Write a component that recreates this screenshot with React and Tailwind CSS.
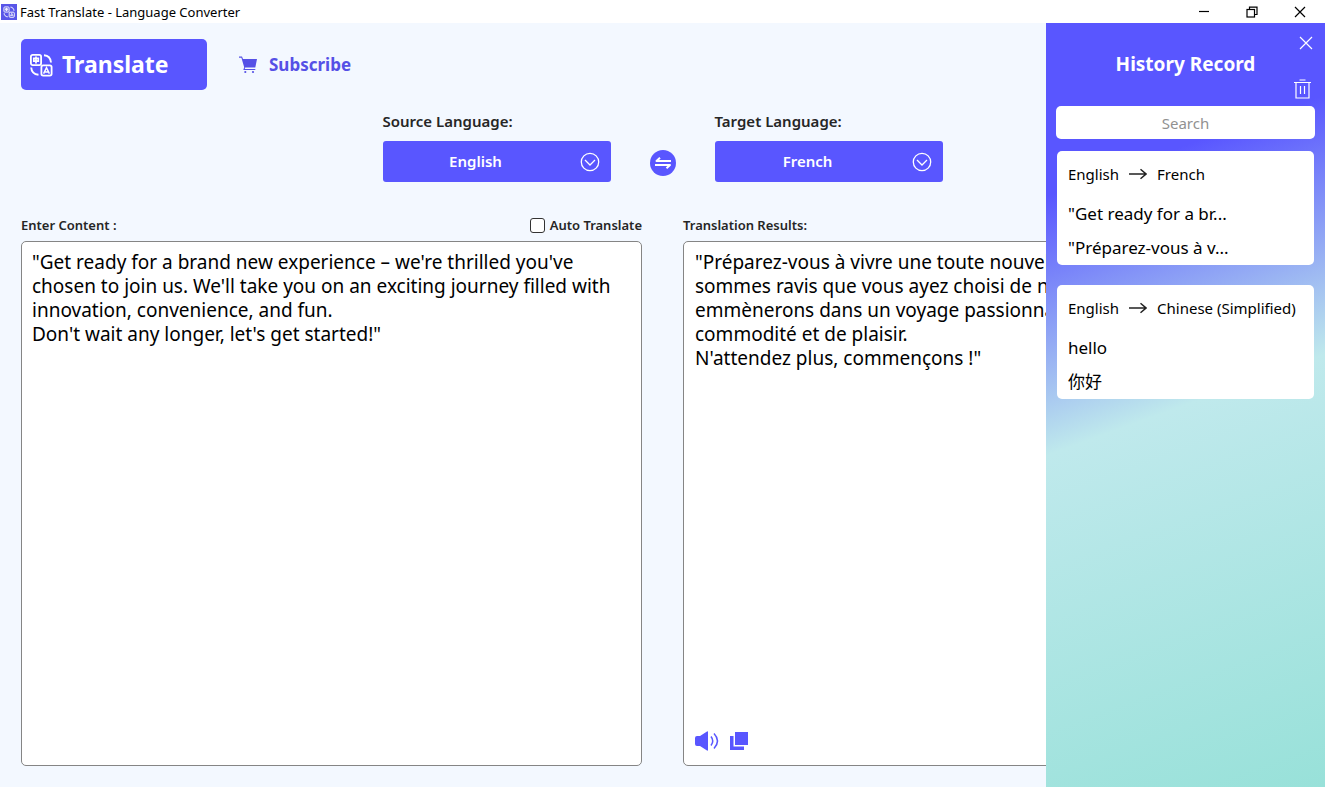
import React, { useState } from "react";

const languages = ["English", "French", "Chinese (Simplified)", "German", "Spanish"];

const sourceSample = `"Get ready for a brand new experience – we're thrilled you've chosen to join us. We'll take you on an exciting journey filled with innovation, convenience, and fun.
Don't wait any longer, let's get started!"`;

const resultSample = `"Préparez-vous à vivre une toute nouvelle expérience – nous sommes ravis que vous ayez choisi de nous rejoindre. Nous vous emmènerons dans un voyage passionnant, plein d'innovation, de commodité et de plaisir.
N'attendez plus, commençons !"`;

const historyItems = [
  { id: 1, from: "English", to: "French", source: "\"Get ready for a br...", result: "\"Préparez-vous à v..." },
  { id: 2, from: "English", to: "Chinese (Simplified)", source: "hello", result: "你好" },
];

const TranslateIcon = ({ className }) => (
  <svg viewBox="0 0 24 24" fill="none" stroke="currentColor" strokeWidth="1.8" className={className} aria-hidden="true">
    <rect x="1.900" y="1.900" width="10.200" height="10.200" rx="1.800" />
    <rect x="12.400" y="12.400" width="10.200" height="10.200" rx="1.800" />
    <path d="M4.800 5.400h4.500v2.800H4.800zM7 3.600v6.800" strokeWidth="1.700" />
    <path d="M14.600 20.600l2.900-6 2.900 6M16 18.900h3" strokeWidth="1.500" />
    <path d="M15 2.200c4 .3 6.600 2.800 7 7.300M2.200 14.500c.3 4.300 2.900 6.900 7.300 7.200" strokeWidth="1.900" />
  </svg>
);

const CartIcon = () => (
  <svg viewBox="0 0 18 18" fill="currentColor" className="size-[18px]" aria-hidden="true">
    <path d="M0 .6h3l1 2.400h14l-1.700 8.400H6.200l-.5 1.500h10.600v1H4.300l.9-2.600L2.400 1.700H0z" />
    <circle cx="6.300" cy="16" r="1.100" />
    <circle cx="14" cy="16" r="1.100" />
  </svg>
);

const ArrowIcon = () => (
  <svg viewBox="0 0 18 12" fill="none" stroke="currentColor" strokeWidth="1.500" className="h-3 w-[18px] shrink-0 text-[#222]" aria-hidden="true">
    <path d="M0 6h17M11.500 1.300L17 6l-5.500 4.700" />
  </svg>
);

const LanguageSelect = ({ id, label, value, onChange }) => (
  <div className="flex w-[228px] flex-col gap-2">
    <label htmlFor={id} className="text-[15px] leading-6 font-semibold text-[#262626]">
      {label}
    </label>
    <div className="relative">
      <select
        id={id}
        value={value}
        onChange={(e) => onChange(e.target.value)}
        className="block h-[41px] w-full appearance-none rounded-[3px] bg-[#5956ff] pr-[42px] text-center text-[15px] font-semibold text-white [text-align-last:center]"
      >
        {languages.map((language) => (
          <option key={language}>{language}</option>
        ))}
      </select>
      <svg
        viewBox="0 0 20 20"
        fill="none"
        stroke="white"
        strokeWidth="1.300"
        className="pointer-events-none absolute top-[11px] right-[11px] size-5"
        aria-hidden="true"
      >
        <circle cx="10" cy="10" r="8.700" />
        <path d="M5 8l5 5 5-5" />
      </svg>
    </div>
  </div>
);

const TitleBar = () => (
  <header className="flex h-[23px] items-center justify-between bg-white pr-px text-black">
    <div className="flex items-center gap-[3px] pl-px">
      <span className="flex size-4 items-center justify-center bg-[#5956e8] text-white">
        <TranslateIcon className="size-3" />
      </span>
      <h1 className="text-[13px] leading-4">Fast Translate - Language Converter</h1>
    </div>
    <div className="flex h-full items-center">
      <button aria-label="Minimize" className="flex h-full w-12 items-center justify-center">
        <svg viewBox="0 0 12 12" stroke="currentColor" strokeWidth="1.200" className="size-3">
          <path d="M1 5.500h10" />
        </svg>
      </button>
      <button aria-label="Restore" className="flex h-full w-12 items-center justify-center">
        <svg viewBox="0 0 12 12" fill="none" stroke="currentColor" strokeWidth="1.200" className="size-3">
          <rect x="1" y="3.500" width="7.500" height="7.500" />
          <path d="M3.500 3.500V1.200H11v7.300H8.500" />
        </svg>
      </button>
      <button aria-label="Close" className="flex h-full w-12 items-center justify-center">
        <svg viewBox="0 0 12 12" stroke="currentColor" strokeWidth="1.200" className="size-3">
          <path d="M1 1l10 10M11 1L1 11" />
        </svg>
      </button>
    </div>
  </header>
);

const HistoryPanel = ({ onClose }) => {
  const [items, setItems] = useState(historyItems);
  const [search, setSearch] = useState("");

  const visibleItems = items.filter((item) =>
    `${item.source} ${item.result}`.toLowerCase().includes(search.toLowerCase())
  );

  return (
    <aside className="absolute inset-y-0 right-0 flex w-[279px] flex-col bg-[linear-gradient(160deg,#5956ff_20%,#bfe9ec_50%,#98e1d9_100%)] px-[10px]">
      <div className="flex justify-end pt-[13px] pr-[2px]">
        <button aria-label="Close history" onClick={onClose} className="text-white">
          <svg viewBox="0 0 14 14" stroke="currentColor" strokeWidth="1.200" className="size-[14px]">
            <path d="M1 1l12 12M13 1L1 13" />
          </svg>
        </button>
      </div>
      <h2 className="text-center text-[19px] leading-[29px] font-bold text-white">History Record</h2>
      <div className="flex justify-end pr-1">
        <button aria-label="Clear history" onClick={() => setItems([])} className="text-white">
          <svg viewBox="0 0 17 20" fill="none" stroke="currentColor" strokeWidth="1.200" className="h-5 w-[17px]">
            <path d="M0 3.500h17M5.500 1h6M2 3.500V19h13V3.500M6.500 7v8M10.500 7v8" />
          </svg>
        </button>
      </div>
      <input
        type="text"
        aria-label="Search history"
        placeholder="Search"
        value={search}
        onChange={(e) => setSearch(e.target.value)}
        className="mt-[7px] h-[33px] w-full shrink-0 rounded-[5px] bg-white text-center text-[15px] text-black placeholder:text-[#919191]"
      />
      <ul className="mt-3 flex flex-col gap-5 px-px text-black">
        {visibleItems.map((item) => (
          <li key={item.id} className="h-[114px] rounded-[5px] bg-white px-[11px] pt-3">
            <div className="flex items-center gap-[10px] text-[15px] leading-[22px] whitespace-nowrap">
              <span>{item.from}</span>
              <ArrowIcon />
              <span>{item.to}</span>
            </div>
            <p className="mt-3 text-[17px] leading-[34px]">{item.source}</p>
            <p className="text-[17px] leading-[34px]">{item.result}</p>
          </li>
        ))}
      </ul>
    </aside>
  );
};

const App = () => {
  const [source, setSource] = useState("English");
  const [target, setTarget] = useState("French");
  const [content, setContent] = useState(sourceSample);
  const [autoTranslate, setAutoTranslate] = useState(false);
  const [showHistory, setShowHistory] = useState(true);

  const swapLanguages = () => {
    setSource(target);
    setTarget(source);
  };

  return (
    <div className="flex min-h-screen flex-col font-['Noto_Sans','Noto_Sans_CJK_SC',sans-serif]">
      <TitleBar />
      <main className="relative flex flex-1 flex-col bg-[#f3f8ff] px-[21px] pt-4 pb-[21px]">
        <nav className="flex items-center gap-8">
          <button className="flex h-[51px] w-[186px] items-center gap-[9px] rounded-[5px] bg-[#5956ff] pl-2 text-[23px] font-bold text-white">
            <TranslateIcon className="size-6" />
            Translate
          </button>
          <button className="flex items-center gap-3 text-[17px] font-bold text-[#5550e6]">
            <CartIcon />
            Subscribe
          </button>
        </nav>

        <div className="mt-[19px] flex items-end justify-center gap-[39px]">
          <LanguageSelect id="source-language" label="Source Language:" value={source} onChange={setSource} />
          <button aria-label="Swap languages" onClick={swapLanguages} className="mb-[6px]">
            <svg viewBox="0 0 26 26" className="size-[26px]">
              <circle cx="13" cy="13" r="13" fill="#5956ff" />
              <path d="M21 11H6.500l3.500-3.200M5 15h15l-3.500 3.200" fill="none" stroke="white" strokeWidth="2" strokeLinejoin="round" />
            </svg>
          </button>
          <LanguageSelect id="target-language" label="Target Language:" value={target} onChange={setTarget} />
        </div>

        <div className="mt-[33px] grid flex-1 grid-cols-2 gap-[41px]">
          <section className="flex flex-col gap-[6px]">
            <div className="flex items-center justify-between text-[13px] leading-5 font-semibold text-[#262626]">
              <label htmlFor="content">Enter Content :</label>
              <label className="flex items-center gap-[5px]">
                <input
                  type="checkbox"
                  checked={autoTranslate}
                  onChange={(e) => setAutoTranslate(e.target.checked)}
                  className="size-[15px] appearance-none rounded-[3px] border border-[#333] bg-white checked:bg-[#5956ff]"
                />
                Auto Translate
              </label>
            </div>
            <textarea
              id="content"
              value={content}
              onChange={(e) => setContent(e.target.value)}
              spellCheck={false}
              className="w-full flex-1 resize-none rounded-[5px] border border-[#858585] bg-white px-[10px] py-2 text-[19px] leading-6 text-black"
            />
          </section>

          <section className="flex flex-col gap-[6px]">
            <label htmlFor="result" className="text-[13px] leading-5 font-semibold text-[#262626]">
              Translation Results:
            </label>
            <div className="flex flex-1 flex-col rounded-[5px] border border-[#858585] bg-white px-[11px] pt-2 pb-[14px]">
              <textarea
                id="result"
                readOnly
                value={resultSample}
                spellCheck={false}
                className="w-full flex-1 resize-none text-[19px] leading-6 text-black"
              />
              <div className="flex items-center gap-[11px] text-[#5956ff]">
                <button aria-label="Read aloud">
                  <svg viewBox="0 0 24 20" fill="none" stroke="currentColor" strokeWidth="1.500" className="h-5 w-6">
                    <path d="M0 7Q0 5 2 5H5L12 .5Q13 0 13 1v18q0 1-1 .5L5 15H2Q0 15 0 13z" fill="currentColor" stroke="none" />
                    <path d="M16 5.500q3.500 4.500 0 9M19 2.500q7 7.500 0 15" />
                  </svg>
                </button>
                <button aria-label="Copy result">
                  <svg viewBox="0 0 18 18" fill="currentColor" className="size-[18px]">
                    <path d="M5 0h13v13H5zM0 4h3.500v10.500H14V18H0z" />
                  </svg>
                </button>
              </div>
            </div>
          </section>
        </div>

        {showHistory && <HistoryPanel onClose={() => setShowHistory(false)} />}
      </main>
    </div>
  );
};

export default App;
